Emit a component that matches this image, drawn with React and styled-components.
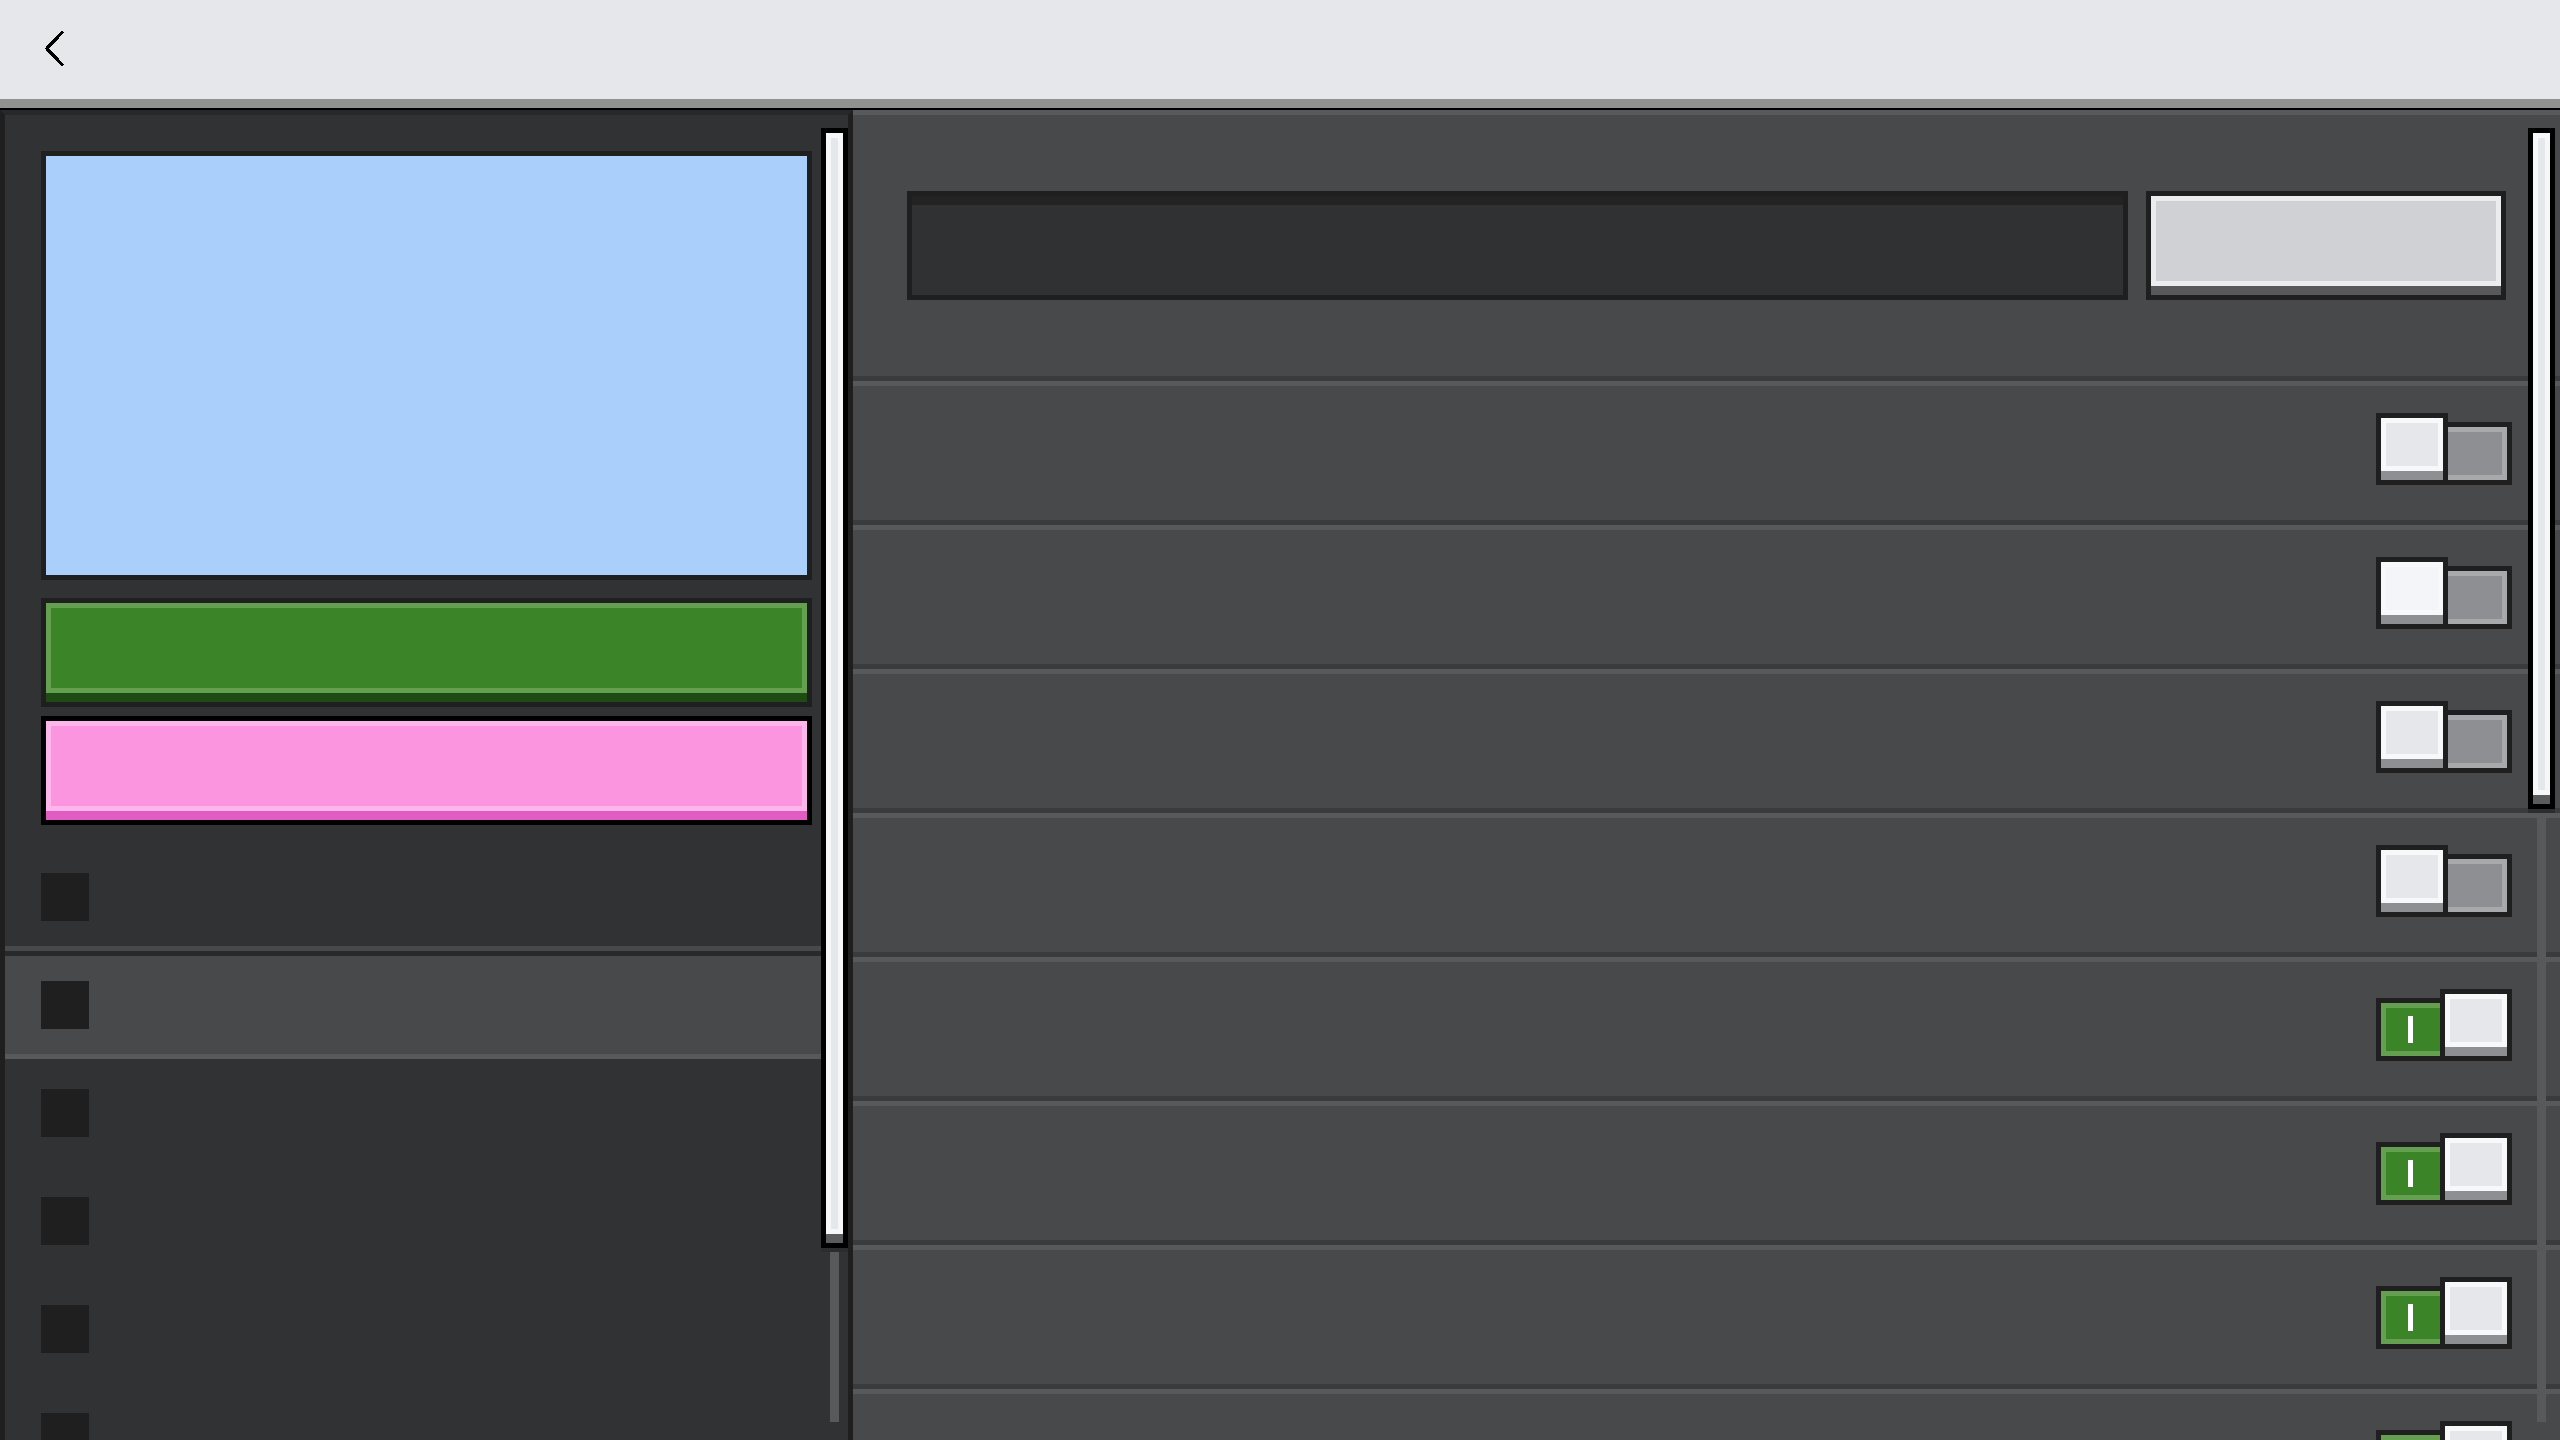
import React from 'react';
import styled, { createGlobalStyle, css } from 'styled-components';

const Global = createGlobalStyle`
  html, body { margin: 0; padding: 0; background: #313234; overflow: hidden; }
  body { font-family: "Liberation Sans", Arial, sans-serif; }
  *, *::before, *::after { box-sizing: border-box; }
`;

const Page = styled.div`
  width: 2560px;
  height: 1440px;
  display: flex;
  flex-direction: column;
  overflow: hidden;
`;

const TopBar = styled.header`
  flex: none;
  height: 110px;
  display: flex;
  align-items: center;
  padding: 0 0 11px 45px;
  background: #e6e7ea;
  border-bottom: 2px solid #000;
  box-shadow: inset 0 -9px 0 #919191;
`;

const BackButton = styled.button`
  display: flex;
  align-items: center;
  justify-content: center;
  width: 19px;
  height: 37px;
  padding: 0;
  margin: 0;
  background: none;
  border: 0;
  cursor: pointer;
`;

const Main = styled.div`
  flex: 1;
  min-height: 0;
  display: flex;
`;

const LeftPanel = styled.aside`
  flex: none;
  width: 853px;
  display: flex;
  background: #313234;
  border-left: 5px solid #1f1f1f;
  border-right: 5px solid #1f1f1f;
  border-top: 5px solid #27282a;
  overflow: hidden;
`;

const ListColumn = styled.div`
  flex: 1;
  display: flex;
  flex-direction: column;
  padding-top: 36px;
`;

const Preview = styled.div`
  flex: none;
  height: 429px;
  margin: 0 9px 0 36px;
  background: #aacffb;
  border: 5px solid #1f1f1f;
`;

const pixelFace = (face, ring, shadow) => css`
  background: ${face};
  box-shadow: inset 0 -9px 0 ${shadow}, inset 5px 5px 0 ${ring},
    inset -5px -14px 0 ${ring};
`;

const ColorButton = styled.button`
  flex: none;
  display: block;
  height: 109px;
  margin: ${(p) => p.$top}px 9px 0 36px;
  padding: 0;
  border: 5px solid ${(p) => p.$border};
  cursor: pointer;
  ${(p) => pixelFace(p.$face, p.$ring, p.$shadow)}
`;

const List = styled.ul`
  list-style: none;
  margin: 18px 0 0;
  padding: 0;
`;

const ListRow = styled.li`
  height: 108px;
  display: flex;
  align-items: center;
  padding-left: 36px;
  position: relative;
  ${(p) =>
    p.$selected &&
    css`
      background: #48494b;
      border-top: 5px solid #28292b;
      border-bottom: 5px solid #58595b;
      box-shadow: 0 -5px 0 #48494b;
    `}
`;

const RowIcon = styled.span`
  width: 48px;
  height: 48px;
  background: #1f1f1f;
`;

const ScrollColumn = styled.div`
  flex: none;
  width: 27px;
  padding-top: 13px;
  display: flex;
  flex-direction: column;
`;

const ScrollBar = styled.div`
  position: ${(p) => (p.$overlay ? 'absolute' : 'static')};
  top: 18px;
  right: 5px;
  width: 27px;
  display: flex;
  flex-direction: column;
`;

const Thumb = styled.div`
  flex: none;
  height: ${(p) => p.$h}px;
  border: 5px solid #000;
  ${pixelFace('#e6e7ea', '#f6f7f9', '#5a5b5d')}
`;

const TrackCap = styled.div`
  flex: none;
  height: 4px;
  background: #2c2d2f;
`;

const TrackLine = styled.div`
  flex: none;
  width: 9px;
  margin-left: 9px;
  height: ${(p) => p.$h}px;
  background: #58595b;
`;

const RightPanel = styled.main`
  flex: 1;
  position: relative;
  display: flex;
  flex-direction: column;
  background: #48494b;
  overflow: hidden;
`;

const Section = styled.section`
  flex: none;
  display: flex;
  align-items: center;
  border-top: 5px solid #58595b;
  border-bottom: 5px solid #3a3b3d;
`;

const Header = styled(Section)`
  height: 271px;
  gap: 18px;
  padding: 0 54px;
`;

const SearchInput = styled.input`
  flex: 1;
  height: 109px;
  margin: 0;
  padding: 0 20px;
  border: 5px solid #1f1f1f;
  background: #303133;
  box-shadow: inset 0 9px 0 #232324;
  outline: none;
  color: #e6e7ea;
  font: 32px "Liberation Sans", Arial, sans-serif;
`;

const GrayButton = styled.button`
  flex: none;
  width: 360px;
  height: 109px;
  padding: 0;
  border: 5px solid #1f1f1f;
  cursor: pointer;
  ${pixelFace('#d0d1d5', '#ebecee', '#58585a')}
`;

const ToggleRow = styled(Section)`
  height: 144px;
  justify-content: flex-end;
  padding: 0 48px 8px 0;
`;

const Toggle = styled.button`
  display: flex;
  align-items: flex-end;
  flex-direction: ${(p) => (p.$on ? 'row-reverse' : 'row')};
  padding: 0;
  margin: 0;
  border: 0;
  background: none;
  cursor: pointer;
`;

const Knob = styled.span`
  flex: none;
  width: 72px;
  height: 72px;
  border: 5px solid #1f1f1f;
  ${(p) => pixelFace(p.$hover ? '#f4f5f8' : '#e6e7ea', '#f7f8fa', '#8e8f93')}
`;

const Track = styled.span`
  flex: none;
  width: 64px;
  height: 63px;
  display: flex;
  align-items: center;
  justify-content: center;
  border: 5px solid #1f1f1f;
  ${(p) =>
    p.$on
      ? css`
          border-right: 0;
          background: #3c8428;
          box-shadow: inset 0 5px 0 #64a050, inset 5px 0 0 #64a050,
            inset 0 -5px 0 #64a050;
        `
      : css`
          border-left: 0;
          background: #8e8f93;
          box-shadow: inset 0 5px 0 #a8a9ab, inset -5px 0 0 #a8a9ab,
            inset 0 -5px 0 #a8a9ab;
        `}
`;

const OnMark = styled.span`
  width: 5px;
  height: 27px;
  margin-left: 0;
  background: #fff;
`;

const toggles = [false, false, false, false, true, true, true, true];

export default function App() {
  return (
    <>
      <Global />
      <Page>
        <TopBar>
          <BackButton aria-label="Back">
            <svg width="19" height="37" viewBox="0 0 19 37" shapeRendering="crispEdges">
              <polyline points="18,1.5 1.8,18.5 18,35.5" fill="none" stroke="#000" strokeWidth="3.2" />
            </svg>
          </BackButton>
        </TopBar>
        <Main>
          <LeftPanel>
            <ListColumn>
              <Preview />
              <ColorButton $top={18} $border="#1f1f1f" $face="#3c8428" $ring="#64a050" $shadow="#1e4b13" />
              <ColorButton $top={9} $border="#000" $face="#fb95e0" $ring="#fdb6ec" $shadow="#e05bc2" />
              <List>
                {Array.from({ length: 6 }).map((_, i) => (
                  <ListRow key={i} $selected={i === 1}>
                    <RowIcon />
                  </ListRow>
                ))}
              </List>
            </ListColumn>
            <ScrollColumn>
              <Thumb $h={1120} />
              <TrackCap />
              <TrackLine $h={170} />
            </ScrollColumn>
          </LeftPanel>
          <RightPanel>
            <Header>
              <SearchInput aria-label="Search" />
              <GrayButton aria-label="Action" />
            </Header>
            {toggles.map((on, i) => (
              <ToggleRow key={i}>
                <Toggle $on={on} aria-pressed={on}>
                  <Knob $hover={i === 1} />
                  <Track $on={on}>{on && <OnMark />}</Track>
                </Toggle>
              </ToggleRow>
            ))}
            <ScrollBar $overlay>
              <Thumb $h={681} />
              <TrackCap />
              <TrackLine $h={609} />
            </ScrollBar>
          </RightPanel>
        </Main>
      </Page>
    </>
  );
}
